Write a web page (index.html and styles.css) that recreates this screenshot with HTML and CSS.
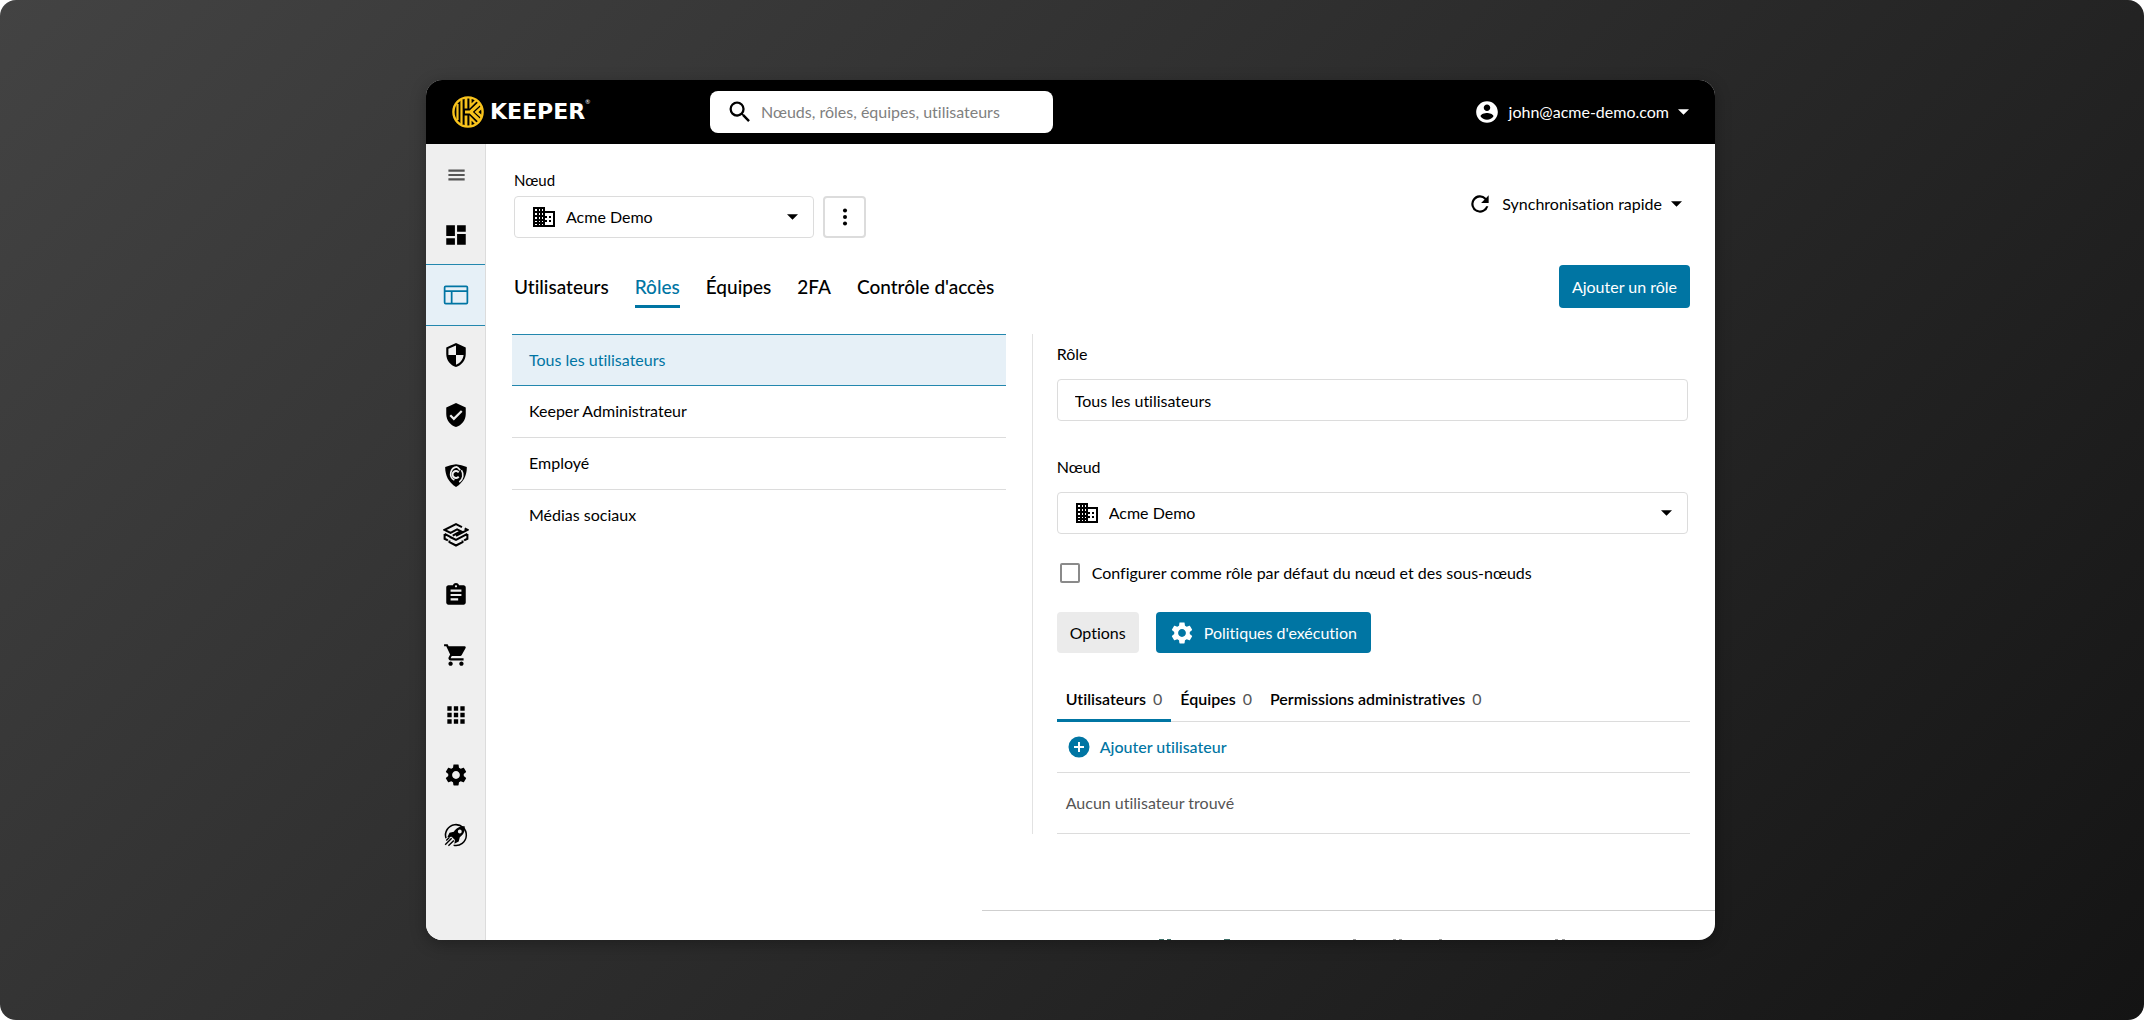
FILE: index.html
```html
<!DOCTYPE html>
<html lang="fr">
<head>
<meta charset="utf-8">
<title>Keeper – Console d'administration</title>
<link rel="stylesheet" href="styles.css">
</head>
<body>
<svg width="0" height="0" class="sprite" aria-hidden="true">
  <symbol id="building" viewBox="0 0 24 24"><path fill-rule="evenodd" d="M1 2h12v4h10v16H1zM3 4v2h2V4zM7 4v2h1V4zM10 4v2h1V4zM3 8v2h2V8zM7 8v2h1V8zM10 8v2h1V8zM3 12v2h2v-2zM7 12v2h1v-2zM10 12v2h1v-2zM3 16v1h2v-1zM7 16v1h1v-1zM10 16v1h1v-1zM3 19v1h2v-1zM7 19v1h1v-1zM10 19v1h1v-1zM13 8v12h8V8z"/><path d="M13 11h2v2h-2zM13 15h2v2h-2zM17 11h2v2h-2zM17 15h2v2h-2z"/></symbol>
  <symbol id="caret" viewBox="0 0 12 6"><path d="M0 0h12L6 6z"/></symbol>
  <symbol id="gear" viewBox="0 0 24 24"><path d="M19.14 12.94c.04-.3.06-.61.06-.94 0-.32-.02-.64-.07-.94l2.03-1.58c.18-.14.23-.41.12-.61l-1.92-3.32c-.12-.22-.37-.29-.59-.22l-2.39.96c-.5-.38-1.03-.7-1.62-.94l-.36-2.54c-.04-.24-.24-.41-.48-.41h-3.84c-.24 0-.43.17-.47.41l-.36 2.54c-.59.24-1.13.57-1.62.94l-2.39-.96c-.22-.08-.47 0-.59.22L2.74 8.87c-.12.21-.08.47.12.61l2.03 1.58c-.05.3-.09.63-.09.94s.02.64.07.94l-2.03 1.58c-.18.14-.23.41-.12.61l1.92 3.32c.12.22.37.29.59.22l2.39-.96c.5.38 1.03.7 1.62.94l.36 2.54c.05.24.24.41.48.41h3.84c.24 0 .44-.17.47-.41l.36-2.54c.59-.24 1.13-.56 1.62-.94l2.39.96c.22.08.47 0 .59-.22l1.92-3.32c.12-.22.07-.47-.12-.61l-2.01-1.58zM12 15.6c-1.98 0-3.6-1.62-3.6-3.6s1.62-3.6 3.6-3.6 3.6 1.62 3.6 3.6-1.62 3.6-3.6 3.6z"/></symbol>
</svg>

<div class="stage">
  <div class="window">
    <header class="topbar">
      <a class="brand" href="#" aria-label="Keeper">
        <svg class="brand-mark" viewBox="0 0 32 32">
          <g fill="none" stroke="#f8c31c" stroke-width="2.4">
            <circle cx="16" cy="16" r="14.6"/>
            <path d="M5.500 8v16M9.500 4v24" stroke-width="2.200"/>
            <path d="M14 2v10.500M14 30V19.500" stroke-width="2.800"/>
            <path d="M13 16h5.500L28 7M18.500 16L28 25" stroke-width="3.200"/>
            <path d="M18.500 2v8l6-6M18.500 30v-8l6 6" stroke-width="2.200"/>
            <path d="M30 11l-5.500 5 5.500 5" stroke-width="2.600"/>
          </g>
        </svg>
        <span class="brand-name">KEEPER</span><span class="brand-reg">®</span>
      </a>
      <label class="search">
        <svg class="icon" viewBox="0 0 24 24"><path d="M15.5 14h-.79l-.28-.27A6.47 6.47 0 0 0 16 9.5 6.5 6.5 0 1 0 9.5 16c1.61 0 3.09-.59 4.23-1.57l.27.28v.79l5 4.99L20.49 19l-4.99-5zm-6 0C7.01 14 5 11.99 5 9.5S7.01 5 9.5 5 14 7.01 14 9.5 11.99 14 9.5 14z"/></svg>
        <input type="search" placeholder="Nœuds, rôles, équipes, utilisateurs" aria-label="Rechercher">
      </label>
      <button class="account" type="button">
        <svg class="icon" viewBox="0 0 24 24"><path d="M12 2C6.48 2 2 6.48 2 12s4.48 10 10 10 10-4.480 10-10S17.520 2 12 2zm0 3c1.660 0 3 1.340 3 3s-1.340 3-3 3-3-1.340-3-3 1.340-3 3-3zm0 14.200c-2.500 0-4.710-1.280-6-3.220.03-1.990 4-3.080 6-3.080 1.990 0 5.970 1.090 6 3.080-1.290 1.940-3.500 3.220-6 3.220z"/></svg>
        <span>john@acme-demo.com</span>
        <svg class="caret"><use href="#caret"/></svg>
      </button>
    </header>

    <div class="body">
      <nav class="rail" aria-label="Navigation">
        <a href="#" aria-label="Menu" class="menu"><svg class="icon" viewBox="0 0 24 24"><path d="M5 7h15v2H5zM5 11h15v2H5zM5 15h15v2H5z"/></svg></a>
        <a href="#" aria-label="Tableau de bord"><svg class="icon" viewBox="0 0 24 24"><path d="M3 13h8V3H3v10zm0 8h8v-6H3v6zm10 0h8V11h-8v10zm0-18v6h8V3h-8z"/></svg></a>
        <a href="#" aria-label="Administration" class="active" aria-current="page"><svg class="icon" viewBox="0 0 24 24"><path fill="none" stroke="currentColor" stroke-width="1.600" d="M2.500 4h19q1 0 1 1v14q0 1-1 1h-19q-1 0-1-1V5q0-1 1-1zM2 8.500h20M8 8.500V20"/></svg></a>
        <a href="#" aria-label="Sécurité"><svg class="icon" viewBox="0 0 24 24"><path d="M12 1L3 5v6c0 5.550 3.840 10.740 9 12 5.160-1.260 9-6.450 9-12V5l-9-4zm0 10.990h7c-.53 4.120-3.280 7.790-7 8.940V12H5V6.300l7-3.110v8.800z"/></svg></a>
        <a href="#" aria-label="Conformité"><svg class="icon" viewBox="0 0 24 24"><path d="M12 1L3 5v6c0 5.550 3.840 10.740 9 12 5.160-1.260 9-6.450 9-12V5l-9-4zm-2 16l-4-4 1.410-1.410L10 14.170l6.590-6.590L18 9l-8 8z"/></svg></a>
        <a href="#" aria-label="BreachWatch"><svg class="icon" viewBox="0 0 24 24"><path d="M12 2q5 .5 10 2.500c0 8-3 14-10 18.500C5 18.500 2 12.500 2 4.500Q7 2.500 12 2z"/><g fill="none" stroke="#efefef" stroke-width="1.500"><path d="M13 4.500a6.500 6.500 0 0 0-2.500 12.200M13 4.500l3 3M15 18.500a8 8 0 0 0 2-11"/><path d="M14.500 9.500a3.200 3.200 0 1 0 0 4" stroke-width="1.800"/></g></svg></a>
        <a href="#" aria-label="Secrets Manager"><svg class="icon" viewBox="0 0 24 24"><path fill="none" stroke="currentColor" stroke-width="1.900" d="M17.500 4.700L12 2 1.500 7.300 7 10l6-3.200 3.500 1.700L9 12.500M6.500 14L12 16.500l10.500-5.500M20 6l2.500 1.300L12 12.800M1.500 11v4.500l3 1.500M1.500 11L12 16.500M22.500 11v4.500l-3 1.500M6 17v1.500l6 3.200 6-3.200V17"/></svg></a>
        <a href="#" aria-label="Rapports"><svg class="icon" viewBox="0 0 24 24"><path d="M19 3h-4.180C14.400 1.840 13.300 1 12 1c-1.300 0-2.400.84-2.820 2H5c-1.100 0-2 .9-2 2v14c0 1.100.9 2 2 2h14c1.100 0 2-.9 2-2V5c0-1.100-.9-2-2-2zm-7 0c.55 0 1 .45 1 1s-.45 1-1 1-1-.45-1-1 .45-1 1-1zm2 14H7v-2h7v2zm3-4H7v-2h10v2zm0-4H7V7h10v2z"/></svg></a>
        <a href="#" aria-label="Abonnements"><svg class="icon" viewBox="0 0 24 24"><path d="M7 18c-1.100 0-1.990.9-1.990 2S5.900 22 7 22s2-.9 2-2-.9-2-2-2zM1 2v2h2l3.600 7.590-1.350 2.450c-.16.280-.25.610-.25.960 0 1.100.9 2 2 2h12v-2H7.420c-.14 0-.25-.11-.25-.25l.03-.12.900-1.630h7.450c.750 0 1.410-.410 1.750-1.030l3.580-6.490A1 1 0 0 0 20 4H5.210l-.94-2H1zm16 16c-1.100 0-1.990.9-1.990 2s.890 2 1.990 2 2-.9 2-2-.9-2-2-2z"/></svg></a>
        <a href="#" aria-label="Applications"><svg class="icon" viewBox="0 0 24 24"><path d="M4 8h4V4H4v4zm6 12h4v-4h-4v4zm-6 0h4v-4H4v4zm0-6h4v-4H4v4zm6 0h4v-4h-4v4zm6-10v4h4V4h-4zm-6 4h4V4h-4v4zm6 6h4v-4h-4v4zm0 6h4v-4h-4v4z"/></svg></a>
        <a href="#" aria-label="Paramètres"><svg class="icon"><use href="#gear"/></svg></a>
        <a href="#" aria-label="Démarrage"><svg class="icon" viewBox="0 0 24 24"><path fill="none" stroke="currentColor" stroke-width="1.400" d="M2.800 15a9.600 9.600 0 1 1 7 6.400"/><path fill-rule="evenodd" d="M20 4c-5 0-8 2-10 5l-4 1-2 4 4-.5 3 3L10.500 20l4-2 1-4c3-2 5-5 4.500-10zM15.500 7a1.800 1.800 0 1 1 0 3.600 1.800 1.800 0 0 1 0-3.600z"/><path fill="none" stroke="currentColor" stroke-width="1.300" d="M8 15l-6 6M10 17l-5 5M6 14l-3 3"/></svg></a>
      </nav>

      <main class="main">
        <div class="content">
          <div class="toolbar">
            <div class="node">
              <label class="node-label" for="node">Nœud</label>
              <div class="node-row">
                <div class="select">
                  <svg class="icon"><use href="#building"/></svg>
                  <select id="node"><option>Acme Demo</option></select>
                  <svg class="caret"><use href="#caret"/></svg>
                </div>
                <button class="more" type="button" aria-label="Plus d'actions"><svg class="icon" viewBox="0 0 24 24"><circle cx="12" cy="5" r="2.200"/><circle cx="12" cy="12" r="2.200"/><circle cx="12" cy="19" r="2.200"/></svg></button>
              </div>
            </div>
            <button class="sync" type="button">
              <svg class="icon" viewBox="0 0 24 24"><path d="M17.650 6.350A8 8 0 1 0 19.730 14h-2.080A6 6 0 1 1 12 6c1.660 0 3.140.69 4.220 1.780L13 11h7V4l-2.350 2.350z"/></svg>
              <span>Synchronisation rapide</span>
              <svg class="caret"><use href="#caret"/></svg>
            </button>
          </div>

          <div class="tabs-row">
            <nav class="tabs" aria-label="Sections">
              <a href="#">Utilisateurs</a>
              <a href="#" class="active">Rôles</a>
              <a href="#">Équipes</a>
              <a href="#">2FA</a>
              <a href="#">Contrôle d'accès</a>
            </nav>
            <button class="primary add-role" type="button">Ajouter un rôle</button>
          </div>

          <div class="columns">
            <ul class="roles">
              <li><a href="#" class="active">Tous les utilisateurs</a></li>
              <li><a href="#">Keeper Administrateur</a></li>
              <li><a href="#">Employé</a></li>
              <li><a href="#">Médias sociaux</a></li>
            </ul>

            <section class="detail">
              <div class="fields">
                <div class="field">
                  <label for="role">Rôle</label>
                  <input class="textbox" id="role" type="text" value="Tous les utilisateurs">
                </div>
                <div class="field">
                  <label for="role-node">Nœud</label>
                  <div class="select">
                    <svg class="icon"><use href="#building"/></svg>
                    <select id="role-node"><option>Acme Demo</option></select>
                    <svg class="caret"><use href="#caret"/></svg>
                  </div>
                </div>
              </div>
              <label class="check"><input type="checkbox"><span>Configurer comme rôle par défaut du nœud et des sous-nœuds</span></label>
              <div class="actions">
                <button class="secondary" type="button">Options</button>
                <button class="primary" type="button"><svg class="icon"><use href="#gear"/></svg><span>Politiques d'exécution</span></button>
              </div>
              <nav class="subtabs" aria-label="Détails du rôle">
                <a href="#" class="active">Utilisateurs <span>0</span></a>
                <a href="#">Équipes <span>0</span></a>
                <a href="#">Permissions administratives <span>0</span></a>
              </nav>
              <div class="add-row">
                <button class="add-user" type="button">
                  <svg class="icon" viewBox="0 0 24 24"><path d="M12 1.500a10.500 10.500 0 1 0 0 21 10.500 10.500 0 0 0 0-21zm5 11.500h-4v4h-2v-4H7v-2h4V7h2v4h4v2z"/></svg>
                  <span>Ajouter utilisateur</span>
                </button>
              </div>
              <p class="empty">Aucun utilisateur trouvé</p>
            </section>
          </div>
        </div>
        <footer class="footer">
          <svg class="footer-edge" viewBox="0 0 733 2" aria-hidden="true"><path fill="#3f6f68" d="M177 1h5v1h-5zM185 1h4v1h-4zM242 1h6v1h-6z"/><path fill="#999" d="M371 1h3v1h-3zM411 1h3v1h-3zM417 1h3v1h-3zM457 1h3v1h-3zM573 1h3v1h-3zM580 1h3v1h-3z"/></svg>
        </footer>
      </main>
    </div>
  </div>
</div>
</body>
</html>
```
FILE: styles.css
```css
* { box-sizing: border-box; }

body {
  margin: 0;
  background: #fff;
  color: #000;
  font-family: Lato, "Liberation Sans", sans-serif;
  font-size: 16px;
  font-variant-ligatures: none;
  line-height: 20px;
}

a { color: inherit; text-decoration: none; }
button, input, select { font: inherit; font-variant-ligatures: none; color: inherit; }
button { border: 0; background: none; padding: 0; cursor: pointer; }
.sprite { position: absolute; }
.icon { display: block; flex: none; width: 26px; height: 26px; fill: currentColor; }
.caret { display: block; flex: none; width: 11px; height: 6px; fill: currentColor; }

.stage {
  display: flex;
  min-height: 100vh;
  padding: 80px 429px 80px 426px;
  border-radius: 16px;
  background: linear-gradient(135deg, #434343, #141414);
}

.window {
  display: flex;
  flex: 1;
  flex-direction: column;
  min-width: 0;
  overflow: hidden;
  border-radius: 16px;
  background: #fff;
  box-shadow: 0 4px 16px rgba(0, 0, 0, 0.3);
}

/* Top bar */
.topbar {
  display: flex;
  align-items: center;
  height: 64px;
  padding: 0 26px;
  background: #000;
  color: #fff;
}
.brand { display: flex; align-items: center; width: 258px; }
.brand-mark { width: 32px; height: 32px; margin-right: 6px; }
.brand-name { font: bold 22px/24px "DejaVu Sans", sans-serif; }
.brand-reg { align-self: flex-start; font-size: 6px; line-height: 12px; }
.search {
  display: flex;
  align-items: center;
  gap: 7px;
  width: 343px;
  height: 42px;
  padding: 0 16px;
  border-radius: 8px;
  background: #fff;
  color: #000;
}
.search .icon { width: 28px; height: 28px; }
.search input { flex: 1; min-width: 0; padding: 0; border: 0; outline: 0; background: none; }
.search input::placeholder { color: #808080; opacity: 1; }
.account { display: flex; align-items: center; gap: 9px; margin-left: auto; }

/* Side rail */
.body { display: flex; flex: 1; }
.rail {
  display: flex;
  flex-direction: column;
  flex: none;
  width: 60px;
  padding-top: 1px;
  border-right: 1px solid #dcdcdc;
  background: #efefef;
}
.rail a { display: flex; align-items: center; justify-content: center; height: 60px; }
.rail .menu { color: #555; }
.rail .active {
  height: 62px;
  margin: -1px 0;
  border: solid #2387ae;
  border-width: 1px 0;
  background: #e6f0f7;
  color: #0075a3;
}

/* Main area */
.main { display: flex; flex: 1; flex-direction: column; min-width: 0; }
.content { padding: 26px 25px 0 26px; }
.toolbar { display: flex; justify-content: space-between; align-items: center; padding: 0 8px 0 2px; }
.node-label { display: block; margin-bottom: 6px; font-size: 15px; }
.node-row { display: flex; gap: 9px; }
.node-row .select { width: 300px; }
.select {
  display: grid;
  grid-template-columns: 52px 1fr 26px;
  align-items: center;
  height: 42px;
  border: 1px solid #dcdcdc;
  border-radius: 4px;
}
.select .icon { grid-area: 1 / 1; width: 24px; height: 24px; margin-left: 17px; pointer-events: none; }
.select .caret { grid-area: 1 / 3; pointer-events: none; }
.select select {
  grid-area: 1 / 1 / 2 / 4;
  width: 100%;
  height: 40px;
  padding: 0 26px 0 51px;
  border: 0;
  background: none;
  appearance: none;
}
.more {
  display: grid;
  place-items: center;
  width: 43px;
  height: 42px;
  border: 2px solid #dcdcdc;
  border-radius: 4px;
}
.more .icon { width: 22px; height: 22px; }
.sync { display: flex; align-items: center; gap: 9px; }

.tabs-row { display: flex; justify-content: space-between; align-items: flex-end; margin-top: 27px; }
.tabs { display: flex; gap: 26px; padding-left: 2px; font-size: 19px; font-weight: 500; line-height: 24px; }
.tabs a { padding-bottom: 6px; border-bottom: 3px solid transparent; }
.tabs .active { border-color: #0075a3; color: #0075a3; }

.primary, .secondary {
  display: flex;
  align-items: center;
  gap: 9px;
  height: 41px;
  border-radius: 4px;
}
.primary { padding: 0 14px 0 13px; background: #0075a3; color: #fff; }
.secondary { padding: 0 13px; background: #ebebeb; }
.add-role { height: 43px; padding: 0 13px; }

.columns { display: grid; grid-template-columns: 3fr 4fr; gap: 26px; margin-top: 26px; }
.roles { margin: 0; padding: 0; list-style: none; }
.roles a {
  display: block;
  padding: 15px 17px 16px;
  border-bottom: 1px solid #dcdcdc;
}
.roles .active {
  padding-top: 15px;
  padding-bottom: 15px;
  border-top: 1px solid #2387ae;
  border-bottom-color: #2387ae;
  background: #e6f0f7;
  color: #0075a3;
}
.roles li:last-child a { border-bottom: 0; }

.detail { padding: 10px 0 0 24px; border-left: 1px solid #e2e2e2; }
.fields { display: grid; gap: 36px; margin-right: 2px; }
.field { display: grid; gap: 15px; }
.textbox {
  width: 100%;
  height: 42px;
  padding: 0 17px;
  border: 1px solid #dcdcdc;
  border-radius: 4px;
}
.check { display: flex; align-items: center; gap: 12px; margin: 29px 0 29px 3px; }
.check input {
  flex: none;
  width: 20px;
  height: 20px;
  margin: 0;
  border: 2px solid #8a8a8a;
  border-radius: 2px;
  appearance: none;
}
.actions { display: flex; gap: 17px; }
.subtabs {
  display: flex;
  margin-top: 36px;
  box-shadow: inset 0 -1px #dcdcdc;
  font-weight: 600;
}
.subtabs a { padding: 0 9px 10px; border-bottom: 3px solid transparent; }
.subtabs .active { border-color: #0075a3; }
.subtabs span { margin-left: 3px; color: #555; font-weight: 400; }
.add-row { padding: 12px 10px; border-bottom: 1px solid #dcdcdc; }
.add-user { display: flex; align-items: center; gap: 9px; color: #0075a3; font-weight: 500; }
.add-user .icon { width: 24px; height: 26px; }
.empty { margin: 0; padding: 20px 9px; border-bottom: 1px solid #dcdcdc; color: #555; }

.footer {
  display: flex;
  align-items: flex-end;
  height: 30px;
  margin: auto 0 0 496px;
  border-top: 1px solid #cfcfcf;
}
.footer-edge { width: 100%; height: 2px; }
```
